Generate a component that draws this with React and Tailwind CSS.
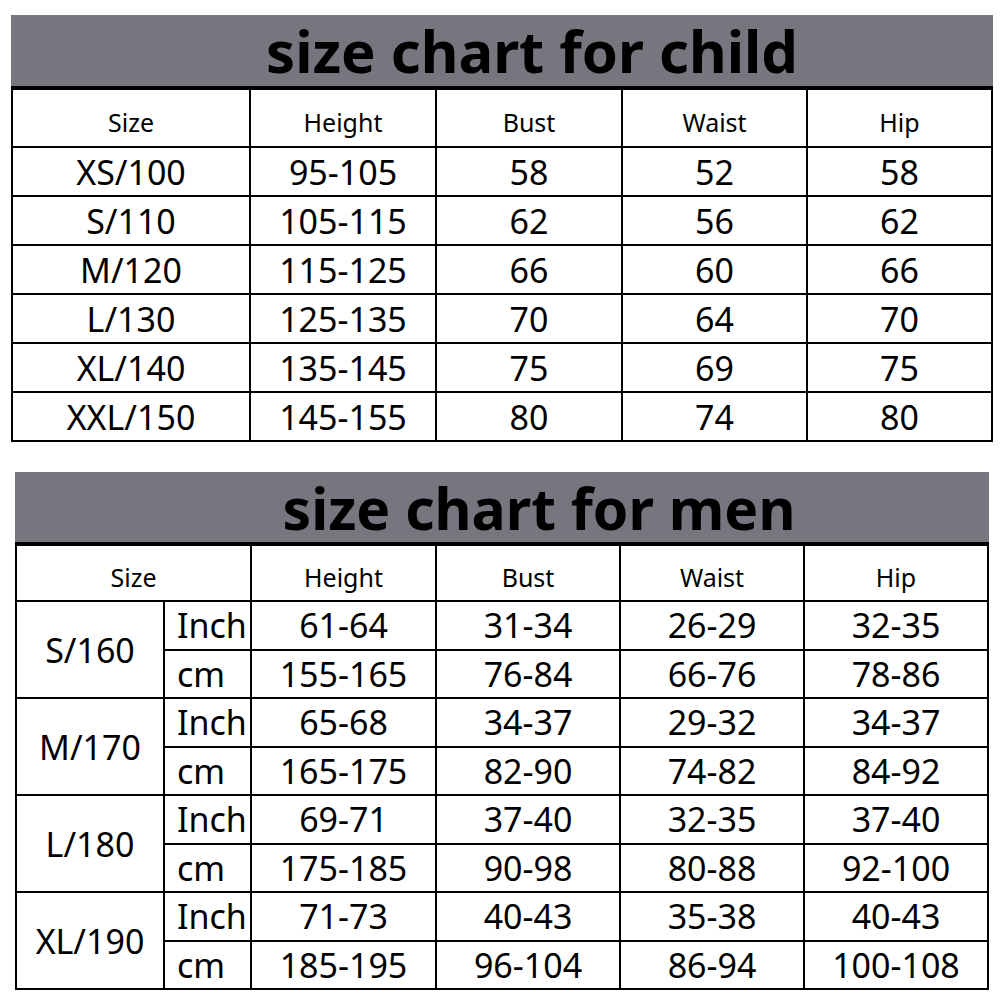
import React from 'react';

const childRows = [
  ['XS/100', '95-105', '58', '52', '58'],
  ['S/110', '105-115', '62', '56', '62'],
  ['M/120', '115-125', '66', '60', '66'],
  ['L/130', '125-135', '70', '64', '70'],
  ['XL/140', '135-145', '75', '69', '75'],
  ['XXL/150', '145-155', '80', '74', '80'],
];

const menRows = [
  { size: 'S/160', inch: ['61-64', '31-34', '26-29', '32-35'], cm: ['155-165', '76-84', '66-76', '78-86'] },
  { size: 'M/170', inch: ['65-68', '34-37', '29-32', '34-37'], cm: ['165-175', '82-90', '74-82', '84-92'] },
  { size: 'L/180', inch: ['69-71', '37-40', '32-35', '37-40'], cm: ['175-185', '90-98', '80-88', '92-100'] },
  { size: 'XL/190', inch: ['71-73', '40-43', '35-38', '40-43'], cm: ['185-195', '96-104', '86-94', '100-108'] },
];

const heads = ['Height', 'Bust', 'Waist', 'Hip'];

const Cell = ({ children, className = '' }) => (
  <div className={`bg-white flex items-center justify-center text-[34px] leading-none text-black ${className}`}>
    {children}
  </div>
);

const HeadCell = ({ children, className = '' }) => (
  <div className={`bg-white flex items-center justify-center pt-[9px] text-[25px] leading-none text-black ${className}`}>
    {children}
  </div>
);

const Title = ({ children, className = '' }) => (
  <div className={`h-[71px] bg-[#77767e] flex items-center justify-center font-bold leading-none text-black ${className}`}>
    <span className="mt-[1px]">{children}</span>
  </div>
);

const App = () => {
  return (
    <div className="w-[1000px] h-[1000px] bg-white pt-[15px]" style={{ fontFamily: '"Noto Sans", "Open Sans", sans-serif' }}>
      {/* child chart */}
      <div className="ml-[11px] w-[982px]">
        <Title className="pl-[60px] text-[58px]">size chart for child</Title>
        <div className="grid grid-cols-[236px_184px_184px_183px_183px] grid-rows-[56px_repeat(6,47px)] gap-[2px] bg-black border-2 border-t-4 border-black">
          <HeadCell>Size</HeadCell>
          {heads.map((h) => (
            <HeadCell key={h}>{h}</HeadCell>
          ))}
          {childRows.map((row) =>
            row.map((v, i) => <Cell key={row[0] + i}>{v}</Cell>)
          )}
        </div>
      </div>

      {/* men chart */}
      <div className="ml-[15px] mt-[30px] w-[974px]">
        <Title className="pl-[74px] text-[57px]">size chart for men</Title>
        <div className="-mt-[1px] grid grid-cols-[146px_85px_183px_182px_182px_182px] grid-rows-[54px_repeat(8,46.5px)] gap-[2px] bg-black border-2 border-t-4 border-black">
          <HeadCell className="col-span-2">Size</HeadCell>
          {heads.map((h) => (
            <HeadCell key={h}>{h}</HeadCell>
          ))}
          {menRows.map((r) => (
            <React.Fragment key={r.size}>
              <Cell className="row-span-2">{r.size}</Cell>
              <Cell className="justify-start pl-[12px] text-[33px]">Inch</Cell>
              {r.inch.map((v, i) => (
                <Cell key={'i' + i}>{v}</Cell>
              ))}
              <Cell className="justify-start pl-[12px] text-[33px]">cm</Cell>
              {r.cm.map((v, i) => (
                <Cell key={'c' + i}>{v}</Cell>
              ))}
            </React.Fragment>
          ))}
        </div>
      </div>
    </div>
  );
};

export default App;
